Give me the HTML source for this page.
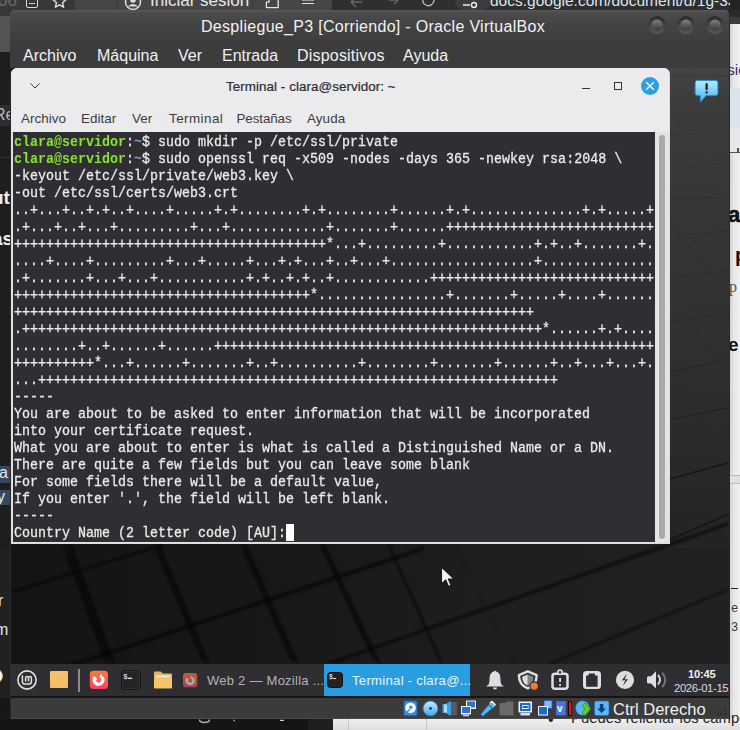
<!DOCTYPE html>
<html><head><meta charset="utf-8">
<style>
*{margin:0;padding:0;box-sizing:border-box}
html,body{width:740px;height:730px;overflow:hidden;background:#1b1b1b;font-family:"Liberation Sans",sans-serif}
div,svg{position:absolute}
.nw{white-space:nowrap}
.vt{color:#f2f2f2;font-size:16px;white-space:nowrap;line-height:20px}
.tm{color:#3c3c3c;font-size:13.4px;white-space:nowrap;line-height:16px;letter-spacing:0.05px}
pre{font-family:"Liberation Mono",monospace;font-size:15px;line-height:17px;color:#ebebeb;position:absolute;left:14px;top:134px;white-space:pre;-webkit-text-stroke-width:0.3px;transform:scaleX(0.88889);transform-origin:0 0}
.g{color:#8ae234;font-weight:bold;-webkit-text-stroke-width:0}
.b{color:#729fcf;font-weight:bold;-webkit-text-stroke-width:0}
</style></head><body>
<!-- browser strip -->
<div style="left:0;top:0;width:75px;height:10px;background:#383838"></div>
<div style="left:75px;top:0;width:257px;height:10px;background:#464646"></div>
<div style="left:117px;top:0;width:1px;height:10px;background:#3a3a3a"></div>
<div style="left:252px;top:0;width:1px;height:10px;background:#3a3a3a"></div>
<div style="left:332px;top:0;width:408px;height:10px;background:#2f2f2f"></div>
<div style="left:455px;top:-8px;width:36px;height:18px;border-radius:9px;background:#3c3c3c"></div>
<div class="nw" style="left:-2px;top:-9px;font-size:17px;color:#6a6a6a">06</div>
<div style="left:26px;top:-4px;width:12px;height:12px;border:1.5px solid #ddd;border-radius:2px"></div><div style="left:29px;top:3px;width:6px;height:1.3px;background:#ddd"></div>
<svg style="left:52px;top:-6px" width="15" height="15" viewBox="0 0 15 15"><path d="M7.5 1l1.9 4.3 4.6 0.4-3.5 3 1.1 4.5-4.1-2.4-4.1 2.4 1.1-4.5-3.5-3 4.6-0.4z" fill="none" stroke="#e0e0e0" stroke-width="1.4" stroke-linejoin="round"/></svg>
<svg style="left:124px;top:-7px" width="18" height="18" viewBox="0 0 18 18"><circle cx="9" cy="9" r="7.5" fill="none" stroke="#ddd" stroke-width="1.5"/><circle cx="9" cy="7" r="2.8" fill="#ddd"/><path d="M3.5 13.5q5.5-5 11 0" fill="#ddd"/></svg>
<div class="nw" style="left:150px;top:-9px;font-size:17px;color:#e6e6e6">Iniciar sesión</div>
<svg style="left:264px;top:0" width="16" height="10" viewBox="0 0 16 10"><path d="M5 0V2.2H2.4V7.6H14.2V0" fill="none" stroke="#e4e4e4" stroke-width="1.3" stroke-linejoin="round"/></svg>
<div style="left:302px;top:0px;width:12px;height:1px;background:#999"></div><div style="left:302px;top:3px;width:12px;height:1.4px;background:#e4e4e4"></div>
<svg style="left:345px;top:-4px" width="100" height="14" viewBox="0 0 100 14"><path d="M6 6h11M6 6l5-5M6 6l5 5" fill="none" stroke="#6a6a6a" stroke-width="1.3"/><path d="M44 4h9M53 4l-4-4M53 4l-4 4" fill="none" stroke="#6a6a6a" stroke-width="1.3"/><path d="M87 0a5.5 5.5 0 1 1-9 3" fill="none" stroke="#bdbdbd" stroke-width="1.3"/></svg>
<svg style="left:462px;top:0" width="18" height="10" viewBox="0 0 18 10"><path d="M1 5h7" stroke="#eee" stroke-width="1.5"/><circle cx="12" cy="5" r="2.5" fill="none" stroke="#eee" stroke-width="1.4"/></svg>
<div class="nw" style="left:490px;top:-8px;font-size:15.5px;color:#dde6f0">docs.google.com/document/d/1g-33mu</div>

<!-- left strip -->
<div style="left:0;top:10px;width:10px;height:6px;background:#383838"></div>
<div style="left:0;top:16px;width:10px;height:36px;background:#545454"></div>
<div style="left:0;top:52px;width:10px;height:498px;background:#1e1e1e"></div>
<div style="left:0;top:105px;width:10px;height:21px;background:#2e2e2e"></div><div style="left:0;top:157px;width:10px;height:1px;background:#303030"></div>
<div class="nw" style="left:-6px;top:106px;font-size:16px;color:#bbb">Re</div>
<div class="nw" style="left:-8px;top:187px;font-size:19px;font-weight:bold;color:#eee">ut</div>
<div class="nw" style="left:-8px;top:228px;font-size:19px;font-weight:bold;color:#eee">as</div>
<div style="left:0;top:466px;width:10px;height:17px;background:#32495f"></div><div style="left:0;top:490px;width:10px;height:15px;background:#32495f"></div>
<div class="nw" style="left:-1px;top:464px;font-size:16px;color:#e4e8ee">a</div>
<div class="nw" style="left:-3px;top:488px;font-size:16px;color:#e4e8ee">y</div>
<div style="left:0;top:550px;width:10px;height:148px;background:#212121"></div><div style="left:0;top:698px;width:10px;height:32px;background:#171717"></div>
<div class="nw" style="left:-2px;top:592px;font-size:16px;color:#e4e4e4">r</div>
<div class="nw" style="left:-5px;top:621px;font-size:16px;color:#e4e4e4">m</div>
<div style="left:-13px;top:668px;width:16px;height:16px;border-radius:50%;background:#eef6f6;border:1.5px solid #f0a040"></div>

<!-- right strip (docs) -->
<div style="left:730px;top:0;width:10px;height:10px;background:#242424"></div>
<div style="left:730px;top:10px;width:10px;height:7px;background:#2a2a2a"></div>
<div style="left:730px;top:17px;width:10px;height:7px;background:#3b3b3b"></div>
<div style="left:730px;top:24px;width:10px;height:706px;background:linear-gradient(90deg,#d0d0d0,#e8e8e8 4px,#f0f0f0 10px)"></div>
<div style="left:730px;top:88px;width:10px;height:40px;background:#dde3ec"></div>
<div class="nw" style="left:727px;top:60.5px;font-size:15.5px;color:#2a3a68">sió</div>
<div class="nw" style="left:728px;top:202px;font-size:22px;font-weight:bold;color:#111;-webkit-text-stroke-width:0.6px">a</div>
<div class="nw" style="left:735px;top:244px;font-size:20px;font-weight:bold;color:#111">p</div>
<div class="nw" style="left:729px;top:278px;font-size:16px;font-family:'Liberation Serif';color:#555">p</div>
<div class="nw" style="left:728px;top:334px;font-size:19px;font-weight:bold;color:#111">e</div>
<div style="left:730px;top:475px;width:10px;height:9px;background:#dfe0e4;border-top:1px solid #bbb;border-bottom:1px solid #bbb"></div><div style="left:730px;top:128px;width:10px;height:24px;background:#e8e8ea"></div><div style="left:730px;top:152px;width:10px;height:1px;background:#555"></div><div style="left:737px;top:148px;width:1.5px;height:4px;background:#555"></div>
<div style="left:731px;top:588px;width:7px;height:1.3px;background:#222"></div>
<div class="nw" style="left:731px;top:602px;font-size:12px;font-family:'Liberation Mono';color:#333">e</div>
<div class="nw" style="left:731px;top:621px;font-size:12px;font-family:'Liberation Mono';color:#333">3</div>

<!-- below VBox -->
<div style="left:0;top:719px;width:308px;height:11px;background:#151515"></div><svg style="left:195px;top:717px" width="100" height="8" viewBox="0 0 100 8"><path d="M4.5 2.5q0 3 5 3t5-3" fill="none" stroke="#b0b0b0" stroke-width="1.5"/><rect x="38.5" y="2.7" width="1.5" height="1.5" fill="#aab"/><rect x="85" y="2.8" width="4" height="1.2" fill="#ccc"/></svg>
<div style="left:308px;top:719px;width:25px;height:11px;background:#1f1f1f"></div>
<div style="left:333px;top:719px;width:15px;height:11px;background:linear-gradient(#ececec,#dcdcdc)"></div>
<div style="left:348px;top:719px;width:392px;height:11px;background:linear-gradient(#f0f0f0,#dedede)"></div>
<div style="left:348px;top:719px;width:1px;height:11px;background:#c8c8c8"></div>
<div style="left:426px;top:719px;width:1px;height:11px;background:#c8c8c8"></div>
<div class="nw" style="left:548px;top:711px;font-size:16px;color:#222">•</div><div class="nw" style="left:571px;top:709.5px;font-size:14.8px;color:#222;letter-spacing:0.05px">Puedes rellenar los campos</div>

<!-- VirtualBox window -->
<div style="left:10px;top:10px;width:720px;height:709px;background:#2a2a2a;border-radius:4px 4px 0 0"></div>
<div style="left:10px;top:10px;width:719px;height:31px;background:linear-gradient(#595959 0px,#4b4b4b 3px,#444 14px,#3e3e3e 31px);border-radius:4px 4px 0 0"></div>
<div style="left:10px;top:41px;width:719px;height:27px;background:#3c3c3c"></div>
<div class="vt" style="left:201px;top:17px;letter-spacing:0.3px">Despliegue_P3 [Corriendo] - Oracle VirtualBox</div>
<div class="vt" style="left:23px;top:46px;">Archivo</div>
<div class="vt" style="left:97px;top:46px;">Máquina</div>
<div class="vt" style="left:178px;top:46px;">Ver</div>
<div class="vt" style="left:222px;top:46px;">Entrada</div>
<div class="vt" style="left:297px;top:46px;letter-spacing:0.2px">Dispositivos</div>
<div class="vt" style="left:403px;top:46px;">Ayuda</div>
<svg style="left:640px;top:10px" width="90" height="31" viewBox="0 0 90 31"><defs><linearGradient id="ring" x1="0" y1="0" x2="0" y2="1"><stop offset="0" stop-color="#2a2a2a"/><stop offset="1" stop-color="#5a5a5a"/></linearGradient><linearGradient id="ball" x1="0" y1="0" x2="0" y2="1"><stop offset="0" stop-color="#808080"/><stop offset="1" stop-color="#383838"/></linearGradient></defs><circle cx="17" cy="15" r="9" fill="url(#ring)"/><circle cx="17" cy="15" r="5.6" fill="url(#ball)"/><circle cx="46" cy="15" r="9" fill="url(#ring)"/><circle cx="46" cy="15" r="5.6" fill="url(#ball)"/><circle cx="75" cy="15" r="9" fill="url(#ring)"/><circle cx="75" cy="15" r="5.6" fill="url(#ball)"/></svg>

<!-- VM display -->
<div style="left:11px;top:68px;width:718px;height:629px;background:linear-gradient(170deg,#1e1e1e,#1a1a1a)"></div>
<div style="left:660px;top:68px;width:69px;height:480px;background:linear-gradient(#3b3b3b,#333 40%,#2a2a2a 80%,#222)"></div>
<svg style="left:11px;top:68px" width="718" height="596" viewBox="11 68 718 596"><defs><linearGradient id="wbg" x1="0" y1="0" x2="1" y2="0"><stop offset="0" stop-color="#141414"/><stop offset="0.4" stop-color="#181818"/><stop offset="0.65" stop-color="#1e1e1e"/><stop offset="1" stop-color="#212121"/></linearGradient><linearGradient id="rs" x1="0" y1="0" x2="0" y2="1"><stop offset="0" stop-color="#444"/><stop offset="0.07" stop-color="#3c3c3c"/><stop offset="0.48" stop-color="#323232"/><stop offset="0.8" stop-color="#2a2a2a"/><stop offset="1" stop-color="#232323"/></linearGradient><linearGradient id="sh0" gradientUnits="userSpaceOnUse" x1="72.0" y1="544.0" x2="59.8" y2="539.6"><stop offset="0" stop-color="#000" stop-opacity="0.5"/><stop offset="0.2" stop-color="#000" stop-opacity="0.35"/><stop offset="0.55" stop-color="#000" stop-opacity="0.15"/><stop offset="1" stop-color="#000" stop-opacity="0"/></linearGradient><linearGradient id="sh1" gradientUnits="userSpaceOnUse" x1="160.3" y1="544.0" x2="151.1" y2="540.2"><stop offset="0" stop-color="#000" stop-opacity="0.5"/><stop offset="0.2" stop-color="#000" stop-opacity="0.35"/><stop offset="0.55" stop-color="#000" stop-opacity="0.15"/><stop offset="1" stop-color="#000" stop-opacity="0"/></linearGradient><linearGradient id="sh2" gradientUnits="userSpaceOnUse" x1="246.8" y1="544.0" x2="237.6" y2="540.0"><stop offset="0" stop-color="#000" stop-opacity="0.5"/><stop offset="0.2" stop-color="#000" stop-opacity="0.35"/><stop offset="0.55" stop-color="#000" stop-opacity="0.15"/><stop offset="1" stop-color="#000" stop-opacity="0"/></linearGradient><linearGradient id="sh3" gradientUnits="userSpaceOnUse" x1="325.3" y1="544.0" x2="317.1" y2="540.2"><stop offset="0" stop-color="#000" stop-opacity="0.5"/><stop offset="0.2" stop-color="#000" stop-opacity="0.35"/><stop offset="0.55" stop-color="#000" stop-opacity="0.15"/><stop offset="1" stop-color="#000" stop-opacity="0"/></linearGradient><linearGradient id="sh4" gradientUnits="userSpaceOnUse" x1="390.0" y1="544.0" x2="385.4" y2="541.9"><stop offset="0" stop-color="#000" stop-opacity="0.45"/><stop offset="0.2" stop-color="#000" stop-opacity="0.32"/><stop offset="0.55" stop-color="#000" stop-opacity="0.14"/><stop offset="1" stop-color="#000" stop-opacity="0"/></linearGradient><linearGradient id="sh5" gradientUnits="userSpaceOnUse" x1="11.0" y1="590.5" x2="9.8" y2="594.3"><stop offset="0" stop-color="#000" stop-opacity="0.5"/><stop offset="0.2" stop-color="#000" stop-opacity="0.35"/><stop offset="0.55" stop-color="#000" stop-opacity="0.15"/><stop offset="1" stop-color="#000" stop-opacity="0"/></linearGradient><linearGradient id="sh6" gradientUnits="userSpaceOnUse" x1="11.0" y1="682.8" x2="9.1" y2="688.5"><stop offset="0" stop-color="#000" stop-opacity="0.5"/><stop offset="0.2" stop-color="#000" stop-opacity="0.35"/><stop offset="0.55" stop-color="#000" stop-opacity="0.15"/><stop offset="1" stop-color="#000" stop-opacity="0"/></linearGradient><linearGradient id="sh7" gradientUnits="userSpaceOnUse" x1="330.0" y1="661.0" x2="328.3" y2="665.7"><stop offset="0" stop-color="#000" stop-opacity="0.5"/><stop offset="0.2" stop-color="#000" stop-opacity="0.35"/><stop offset="0.55" stop-color="#000" stop-opacity="0.15"/><stop offset="1" stop-color="#000" stop-opacity="0"/></linearGradient><linearGradient id="sh8" gradientUnits="userSpaceOnUse" x1="548.0" y1="663.0" x2="546.5" y2="666.7"><stop offset="0" stop-color="#000" stop-opacity="0.45"/><stop offset="0.2" stop-color="#000" stop-opacity="0.32"/><stop offset="0.55" stop-color="#000" stop-opacity="0.14"/><stop offset="1" stop-color="#000" stop-opacity="0"/></linearGradient><filter id="bl" x="-10%" y="-10%" width="120%" height="120%"><feGaussianBlur stdDeviation="0.9"/></filter></defs><rect x="11" y="68" width="718" height="596" fill="url(#wbg)"/><rect x="660" y="68" width="69" height="480" fill="url(#rs)"/><g filter="url(#bl)"><polygon points="72.0,544.0 115.7,664.0 103.5,659.6 59.8,539.6" fill="url(#sh0)"/><polygon points="160.3,544.0 210.3,664.0 201.1,660.2 151.1,540.2" fill="url(#sh1)"/><polygon points="246.8,544.0 299.5,664.0 290.3,660.0 237.6,540.0" fill="url(#sh2)"/><polygon points="325.3,544.0 381.3,664.0 373.1,660.2 317.1,540.2" fill="url(#sh3)"/><polygon points="390.0,544.0 444.0,664.0 439.4,661.9 385.4,541.9" fill="url(#sh4)"/><polygon points="11.0,590.5 162.0,543.5 160.8,547.3 9.8,594.3" fill="url(#sh5)"/><polygon points="11.0,682.8 425.0,545.5 423.1,551.2 9.1,688.5" fill="url(#sh6)"/><polygon points="330.0,661.0 729.0,521.5 727.3,526.2 328.3,665.7" fill="url(#sh7)"/><polygon points="548.0,663.0 729.0,587.5 727.5,591.2 546.5,666.7" fill="url(#sh8)"/><line x1="454.7" y1="545" x2="513.8" y2="663" stroke="#1a1a1a" stroke-width="1"/></g><line x1="670" y1="76.5" x2="729" y2="76" stroke="#3b3b3b" stroke-width="1"/><line x1="690" y1="68" x2="729" y2="110" stroke="#3c3c3c" stroke-width="1"/><line x1="670" y1="134" x2="729" y2="132.6" stroke="#353535" stroke-width="1"/><line x1="670" y1="165.6" x2="729" y2="163.4" stroke="#343434" stroke-width="1"/><line x1="670" y1="199.7" x2="729" y2="197" stroke="#323232" stroke-width="1"/><line x1="670" y1="236.6" x2="729" y2="231" stroke="#303030" stroke-width="1"/><line x1="670" y1="277.6" x2="729" y2="270.8" stroke="#2e2e2e" stroke-width="1"/><line x1="670" y1="322" x2="729" y2="313" stroke="#2b2b2b" stroke-width="1"/><line x1="670" y1="372" x2="729" y2="359.4" stroke="#272727" stroke-width="1"/><line x1="670" y1="420" x2="729" y2="407.4" stroke="#202020" stroke-width="1.2"/><line x1="670" y1="479" x2="729" y2="462.6" stroke="#181818" stroke-width="1.6"/><line x1="670" y1="539.5" x2="729" y2="514" stroke="#161616" stroke-width="1.8"/><line x1="673" y1="116" x2="728" y2="190" stroke="#343434" stroke-width="1"/><line x1="673" y1="171" x2="728" y2="247.5" stroke="#323232" stroke-width="1"/><line x1="673" y1="228" x2="728" y2="291" stroke="#303030" stroke-width="1"/><line x1="673" y1="300" x2="728" y2="370" stroke="#2c2c2c" stroke-width="1"/><line x1="673" y1="380" x2="728" y2="450" stroke="#282828" stroke-width="1"/></svg>

<!-- notification icon -->
<svg style="left:693px;top:77.5px;transform:scale(0.95);transform-origin:14px 10px" width="28" height="28" viewBox="0 0 28 28">
<defs><linearGradient id="nb" x1="0" y1="0" x2="0" y2="1"><stop offset="0" stop-color="#b8ecff"/><stop offset="1" stop-color="#3cb4f0"/></linearGradient></defs>
<path d="M4 2h19a2.5 2.5 0 0 1 2.5 2.5v11a2.5 2.5 0 0 1-2.5 2.5h-10l-6 7v-7h-3a2.5 2.5 0 0 1-2.5-2.5v-11a2.5 2.5 0 0 1 2.5-2.5z" fill="url(#nb)" stroke="#1f8ee0" stroke-width="1"/>
<rect x="12.5" y="5" width="2.2" height="7" fill="#111"/><rect x="12.5" y="13.5" width="2.2" height="2.2" fill="#111"/>
</svg>

<!-- terminal -->
<div style="left:11px;top:68px;width:659px;height:476px;background:#dcdcdc;border-radius:6px 6px 0 0"></div>
<div style="left:11px;top:68px;width:658px;height:64px;background:#ebebed;border-radius:6px 6px 0 0"></div>
<div style="left:12px;top:132px;width:657px;height:411px;background:#e4e4e4"></div>
<svg style="left:29px;top:81px" width="12" height="9" viewBox="0 0 12 9"><path d="M1.5 2.5l4.5 4.5 4.5-4.5" fill="none" stroke="#3a3a3a" stroke-width="1"/></svg>
<div class="tm" style="left:226px;top:79px;color:#2c2c2c;letter-spacing:0.06px;-webkit-text-stroke:0.2px #2c2c2c">Terminal - clara@servidor: ~</div>
<div style="left:582px;top:88px;width:8px;height:1.3px;background:#333"></div>
<div style="left:614px;top:82px;width:8px;height:8px;border:1.5px solid #333"></div>
<div style="left:641px;top:77px;width:18px;height:18px;border-radius:50%;background:#2d9fe0"></div>
<svg style="left:641px;top:77px" width="18" height="18" viewBox="0 0 18 18"><path d="M5.2 5.2l7.6 7.6M12.8 5.2l-7.6 7.6" stroke="#fff" stroke-width="1.3"/></svg>
<div class="tm" style="left:21px;top:111px;">Archivo</div>
<div class="tm" style="left:81px;top:111px;">Editar</div>
<div class="tm" style="left:132px;top:111px;">Ver</div>
<div class="tm" style="left:169px;top:111px;letter-spacing:0.45px">Terminal</div>
<div class="tm" style="left:236.5px;top:111px;letter-spacing:-0.1px">Pestañas</div>
<div class="tm" style="left:307px;top:111px;letter-spacing:0.1px">Ayuda</div>
<div style="left:13px;top:132px;width:642px;height:410px;background:#2e2e33"></div>
<div style="left:659px;top:135px;width:6px;height:404px;background:#a9a9a9;border-radius:3px"></div>
<pre><span class="g">clara@servidor</span>:<span class="b">~</span>$ sudo mkdir -p /etc/ssl/private
<span class="g">clara@servidor</span>:<span class="b">~</span>$ sudo openssl req -x509 -nodes -days 365 -newkey rsa:2048 \
-keyout /etc/ssl/private/web3.key \
-out /etc/ssl/certs/web3.crt
..+...+..+.+..+....+.....+.+........+.+........+......+.+..............+.+.....+
.+...+..+...+.........+...+............+.......+......++++++++++++++++++++++++++
+++++++++++++++++++++++++++++++++++++++*...+.........+...........+.+..+.......+.
....+....+.........+...+.....+...+.+...+..+...+..................+..............
.+.......+...+...+...........+.+..+.+..+............++++++++++++++++++++++++++++
+++++++++++++++++++++++++++++++++++++*................+.......+.....+....+......
+++++++++++++++++++++++++++++++++++++++++++++++++++++++++++++++++
.+++++++++++++++++++++++++++++++++++++++++++++++++++++++++++++++++*......+.+....
........+..+......+......+++++++++++++++++++++++++++++++++++++++++++++++++++++++
++++++++++*...+......+.......+..+..........+........+.......+......+..+...+...+.
...+++++++++++++++++++++++++++++++++++++++++++++++++++++++++++++++++
-----
You are about to be asked to enter information that will be incorporated
into your certificate request.
What you are about to enter is what is called a Distinguished Name or a DN.
There are quite a few fields but you can leave some blank
For some fields there will be a default value,
If you enter '.', the field will be left blank.
-----
Country Name (2 letter code) [AU]:</pre>
<div style="left:286px;top:524px;width:8px;height:17px;background:#fff"></div>

<!-- mouse cursor -->
<svg style="left:440px;top:566px" width="16" height="23" viewBox="0 0 16 23"><path d="M1.5 1.2v16.8l4.2-4 2.8 6.4 2.6-1.1-2.8-6.2h5.8z" fill="#f4f4f4" stroke="#1a1a1a" stroke-width="1.1" stroke-linejoin="round"/></svg>

<!-- panel -->
<div style="left:11px;top:664px;width:718px;height:33px;background:#2e2e33"></div>

<svg style="left:15px;top:668px" width="24" height="24" viewBox="0 0 24 24"><circle cx="12" cy="12" r="9.1" fill="none" stroke="#e2e2e2" stroke-width="1.6"/>
<path d="M7.4 7.2V13.5A2.6 2.6 0 0 0 10 16.1H13.8A2.6 2.6 0 0 0 16.4 13.5V9.9A1.45 1.45 0 0 0 13.5 9.9V13.6M13.5 9.9A1.45 1.45 0 0 0 10.6 9.9V13.6" fill="none" stroke="#e2e2e2" stroke-width="1.5"/></svg>
<div style="left:50px;top:671px;width:18px;height:17px;background:linear-gradient(#f6c46c,#f3bd62);border-radius:1px"></div>
<div style="left:78px;top:669px;width:2px;height:23px;background:#8c8c8c"></div>
<svg style="left:87px;top:668px" width="24" height="24" viewBox="0 0 24 24"><defs><linearGradient id="ff" x1="0" y1="0" x2="0" y2="1"><stop offset="0" stop-color="#ff7c36"/><stop offset="1" stop-color="#ff3a6c"/></linearGradient></defs>
<rect x="2.8" y="2.8" width="18.2" height="18.2" rx="3.5" fill="url(#ff)"/>
<path d="M8.2 9.2A4.3 4.3 0 1 0 15.2 9.6" fill="none" stroke="#fff" stroke-width="3.5"/><path d="M12.3 9.4L13.9 5.4L16.9 10.4z" fill="#fff"/><path d="M7 8.3L10.6 11.2L8.4 12.2z" fill="#fff"/></svg>
<svg style="left:121px;top:670px" width="20" height="20" viewBox="0 0 20 20"><rect x="0.6" y="0.5" width="18.8" height="19" rx="3.5" fill="#242424" stroke="#111" stroke-width="1"/><rect x="1.5" y="1.3" width="17" height="17.4" rx="3" fill="none" stroke="#3a3a3a" stroke-width="0.8"/><text x="2.4" y="8.6" font-size="7.2" font-family="Liberation Sans" font-weight="bold" fill="#d4d4d4">$</text><rect x="6.9" y="7.7" width="4.3" height="1.3" fill="#e4e4e4"/></svg>
<svg style="left:153px;top:671px" width="20" height="18" viewBox="0 0 20 18"><path d="M1 1.5a1 1 0 0 1 1-1h5.8l2 2h8.2a1 1 0 0 1 1 1v13a1 1 0 0 1-1 1h-16a1 1 0 0 1-1-1z" fill="#ecb55a"/><rect x="2.8" y="4.5" width="14.2" height="1.9" fill="#ececec"/><rect x="1" y="6.2" width="18" height="10.6" rx="0.8" fill="#f6c46c"/></svg>
<svg style="left:183px;top:673px" width="15" height="15" viewBox="0 0 15 15"><defs><linearGradient id="ffd" x1="0" y1="0" x2="0" y2="1"><stop offset="0" stop-color="#b8603a"/><stop offset="1" stop-color="#b03e52"/></linearGradient></defs><rect x="0" y="0" width="14.2" height="14.2" rx="2.5" fill="url(#ffd)"/><path d="M4.6 5.5A3.3 3.3 0 1 0 9.6 5.3" fill="none" stroke="#a8acae" stroke-width="2.5"/><path d="M7.3 5.6L8.5 2.5L10.7 5.9z" fill="#a8acae"/></svg>
<div class="nw" style="left:207px;top:673px;font-size:13px;color:#b4b4b4;letter-spacing:0.25px">Web 2 — Mozilla ...</div>
<div style="left:324px;top:664px;width:146px;height:32px;background:#2a9de0"></div>
<svg style="left:327px;top:672px" width="16" height="16" viewBox="0 0 16 16"><rect x="0.5" y="0.5" width="15" height="15" rx="3" fill="#222" stroke="#111"/><text x="2" y="7" font-size="6.5" font-family="Liberation Mono" font-weight="bold" fill="#ddd">$</text><rect x="6" y="6" width="3.2" height="1.1" fill="#ddd"/></svg>
<div class="nw" style="left:352px;top:673px;font-size:13.2px;color:#e6f4fd;letter-spacing:0.25px">Terminal - clara@...</div>
<svg style="left:482px;top:667px" width="28" height="26" viewBox="0 0 28 26"><path d="M13 3.8c0.6 0 1 0.3 1.2 0.8 3 0.8 4.2 3.5 4.2 6.5 0 3.2 0.4 5.2 1.2 6.6l1.8 1.2v0.6h-16.8v-0.6l1.8-1.2c0.8-1.4 1.2-3.4 1.2-6.6 0-3 1.2-5.7 4.2-6.5 0.2-0.5 0.6-0.8 1.2-0.8z" fill="#dedede"/><path d="M11 20.4h4a2 2 0 0 1-4 0z" fill="#dedede"/></svg>
<svg style="left:514px;top:667px" width="28" height="26" viewBox="0 0 28 26"><path d="M13.8 4.3L22.7 8.1C22.7 15 19.5 19.6 13.8 21.3C8.1 19.6 4.9 15 4.9 8.1Z" fill="none" stroke="#e0e0e0" stroke-width="2.4" stroke-linejoin="round"/><path d="M13.8 7.4L8.2 9.7C8.2 14.4 10.3 17.3 13.8 18.6Z" fill="#dcdcdc"/><path d="M13.8 7.4L19.4 9.7C19.4 14.4 17.3 17.3 13.8 18.6Z" fill="#858585"/><circle cx="20.2" cy="19.1" r="4.3" fill="#f07b30" stroke="#2e2e33" stroke-width="1.2"/></svg>
<svg style="left:546px;top:667px" width="28" height="26" viewBox="0 0 28 26"><rect x="6.5" y="6.7" width="15" height="15" rx="2.5" fill="none" stroke="#e0e0e0" stroke-width="2.5"/><circle cx="14" cy="5.3" r="2.2" fill="#2e2e33" stroke="#e0e0e0" stroke-width="1.6"/><rect x="13.1" y="11" width="1.9" height="3.9" fill="#e0e0e0"/><rect x="13.1" y="17.2" width="1.9" height="1.8" fill="#e0e0e0"/></svg>
<svg style="left:578px;top:667px" width="28" height="26" viewBox="0 0 28 26"><rect x="5" y="4" width="18" height="18" rx="3.5" fill="#e0e0e0"/><path d="M8.1 7.4H10.6V5.4H17V7.4H19.6V18.7H8.1Z" fill="#2e2e33" transform="translate(0,1)"/></svg>
<svg style="left:612px;top:667px" width="28" height="26" viewBox="0 0 28 26"><circle cx="13" cy="12.9" r="9.1" fill="#dedede"/><path d="M14.9 6.6L9.8 13.6L13.2 13.1L11.1 19.1L16 12.1L12.6 12.5Z" fill="#2e2e33"/></svg>
<svg style="left:642px;top:667px" width="28" height="26" viewBox="0 0 28 26"><path d="M6.5 9.2h2.5l5-5v17.4l-5-5h-2.5a1.5 1.5 0 0 1-1.5-1.5v-4.4a1.5 1.5 0 0 1 1.5-1.5z" fill="#e0e0e0"/><path d="M16.4 8.6a6 6 0 0 1 0 8.2" fill="none" stroke="#e0e0e0" stroke-width="1.9" stroke-linecap="round"/><path d="M20.5 6.3a9.5 9.5 0 0 1 0 13.3" fill="none" stroke="#7a7a7a" stroke-width="1.8" stroke-linecap="round"/></svg>
<div class="nw" style="left:688px;top:667.5px;font-size:11.2px;font-weight:bold;color:#eeeeee;letter-spacing:-0.2px">10:45</div>
<div class="nw" style="left:674px;top:682px;font-size:11.3px;color:#dddddd;letter-spacing:-0.35px">2026-01-15</div>


<!-- status bar -->
<div style="left:11px;top:696px;width:718px;height:2px;background:#141414"></div><div style="left:11px;top:698px;width:718px;height:20px;background:#3b3b3b"></div><div style="left:11px;top:718px;width:718px;height:1px;background:#4a4a4a"></div>

<svg style="left:403px;top:700px" width="15" height="17" viewBox="0 0 15 17"><rect x="1" y="1" width="13" height="14.5" rx="1" fill="#2f8fe6" stroke="#1466c0" stroke-width="1"/><circle cx="7.5" cy="7.8" r="5.3" fill="#f4f8fc"/><circle cx="7.8" cy="7.2" r="1.8" fill="#3a90e0"/><path d="M2.8 13.2l4.2-4" stroke="#3a90e0" stroke-width="1.5"/></svg>
<svg style="left:422px;top:700px" width="17" height="17" viewBox="0 0 17 17"><defs><linearGradient id="cd" x1="0" y1="0" x2="0" y2="1"><stop offset="0" stop-color="#c4ecff"/><stop offset="1" stop-color="#40aaee"/></linearGradient></defs><circle cx="8.5" cy="8.5" r="7.4" fill="url(#cd)" stroke="#2a7ad0" stroke-width="0.8"/><circle cx="8.5" cy="8.5" r="1.4" fill="#103a80"/></svg>
<svg style="left:441px;top:700px" width="17" height="17" viewBox="0 0 17 17"><rect x="8" y="2" width="8" height="13" fill="#5a5a5a"/><path d="M1.5 4h3l5.5-3v15l-5.5-3h-3z" fill="#3aa0e8"/><rect x="3" y="4.5" width="3" height="8" fill="#a8dcff"/></svg>
<svg style="left:460px;top:700px" width="17" height="17" viewBox="0 0 17 17"><rect x="6" y="0.5" width="10" height="8.5" fill="#f4f4f4"/><rect x="7" y="1.5" width="8" height="6" fill="#2a70d8"/><rect x="1" y="6" width="10" height="8.5" fill="#f4f4f4"/><rect x="2" y="7" width="8" height="6" fill="#2a70d8"/><rect x="3" y="14.5" width="6" height="1.8" fill="#ccc"/></svg>
<svg style="left:480px;top:700px" width="17" height="17" viewBox="0 0 17 17"><path d="M1.5 15.5l-0.5-1.5 7.5-9 3.5 3.5-9 7.5z" fill="#5ab8f0" stroke="#1a70d0" stroke-width="0.8"/><path d="M9.5 2.5l2.5-2 4 4-2 2.5z" fill="#f4f4f4"/><path d="M8.5 4l3.5-1.5 2.5 2.5-1.5 3.5z" fill="#5ab8f0"/></svg>
<svg style="left:499px;top:700px" width="15" height="17" viewBox="0 0 15 17"><path d="M0.5 3h6l1.5-1.5h6.5v14h-14z" fill="#6a6a6a"/></svg>
<svg style="left:518px;top:701px" width="15" height="16" viewBox="0 0 15 16"><rect x="0.5" y="0.5" width="13.5" height="11" fill="#f4f4f4"/><rect x="2" y="2" width="10.5" height="8" fill="#1a6ad0"/><rect x="4" y="4" width="6.5" height="4" fill="#f4f4f4"/><rect x="4.5" y="5" width="5.5" height="2" fill="#1a6ad0"/><rect x="2.5" y="12" width="9.5" height="2.5" fill="#e0e0e0"/></svg>
<svg style="left:537px;top:700px" width="16" height="17" viewBox="0 0 16 17"><rect x="7" y="0.5" width="8" height="8" fill="#8ab8f4" stroke="#1a5ac0" stroke-width="0.8"/><rect x="1" y="6" width="10" height="9.5" fill="#f4f4f4"/><rect x="2" y="7" width="8" height="7.5" fill="#1a6ad0"/></svg>
<svg style="left:555px;top:700px" width="12" height="17" viewBox="0 0 12 17"><rect x="1" y="1" width="10" height="14.5" fill="#4a78d8" stroke="#2a48a0" stroke-width="1" stroke-dasharray="1 1"/><text x="2" y="12" font-size="10" font-family="Liberation Sans" font-weight="bold" fill="#fff">v</text></svg>
<div style="left:568px;top:701px;width:4px;height:15px;background:#111"></div>
<div style="left:569px;top:702px;width:2px;height:13px;background:#ee1010"></div>
<svg style="left:575px;top:700px" width="17" height="17" viewBox="0 0 17 17"><ellipse cx="7.5" cy="8" rx="7" ry="7.3" fill="#5ab8f0" stroke="#1a70c8" stroke-width="0.8"/><path d="M7 5.5l3-2.5 5.5 6-5.5 6.5-3-2.5 3-4z" fill="#66cc22" stroke="#3a8a10" stroke-width="0.8"/></svg>
<svg style="left:594px;top:700px" width="16" height="17" viewBox="0 0 16 17"><rect x="0.5" y="1" width="14.5" height="14.5" rx="2" fill="#5ab8f4" stroke="#1a70c8" stroke-width="0.8"/><path d="M5.8 4h3.6v4.5h2.6l-4.4 4.5-4.4-4.5h2.6z" fill="#0c3a88"/></svg>

<div class="nw" style="left:613px;top:700px;font-size:16.5px;color:#f0f0f0">Ctrl Derecho</div><svg style="left:715px;top:704px" width="13" height="13" viewBox="0 0 13 13"><g fill="#2a2a2a"><rect x="2" y="9" width="1.6" height="1.6"/><rect x="5.4" y="9" width="1.6" height="1.6"/><rect x="9" y="9" width="1.6" height="1.6"/><rect x="5.4" y="5.6" width="1.6" height="1.6"/><rect x="9" y="5.6" width="1.6" height="1.6"/><rect x="9" y="2" width="1.6" height="1.6"/></g></svg>
</body></html>
